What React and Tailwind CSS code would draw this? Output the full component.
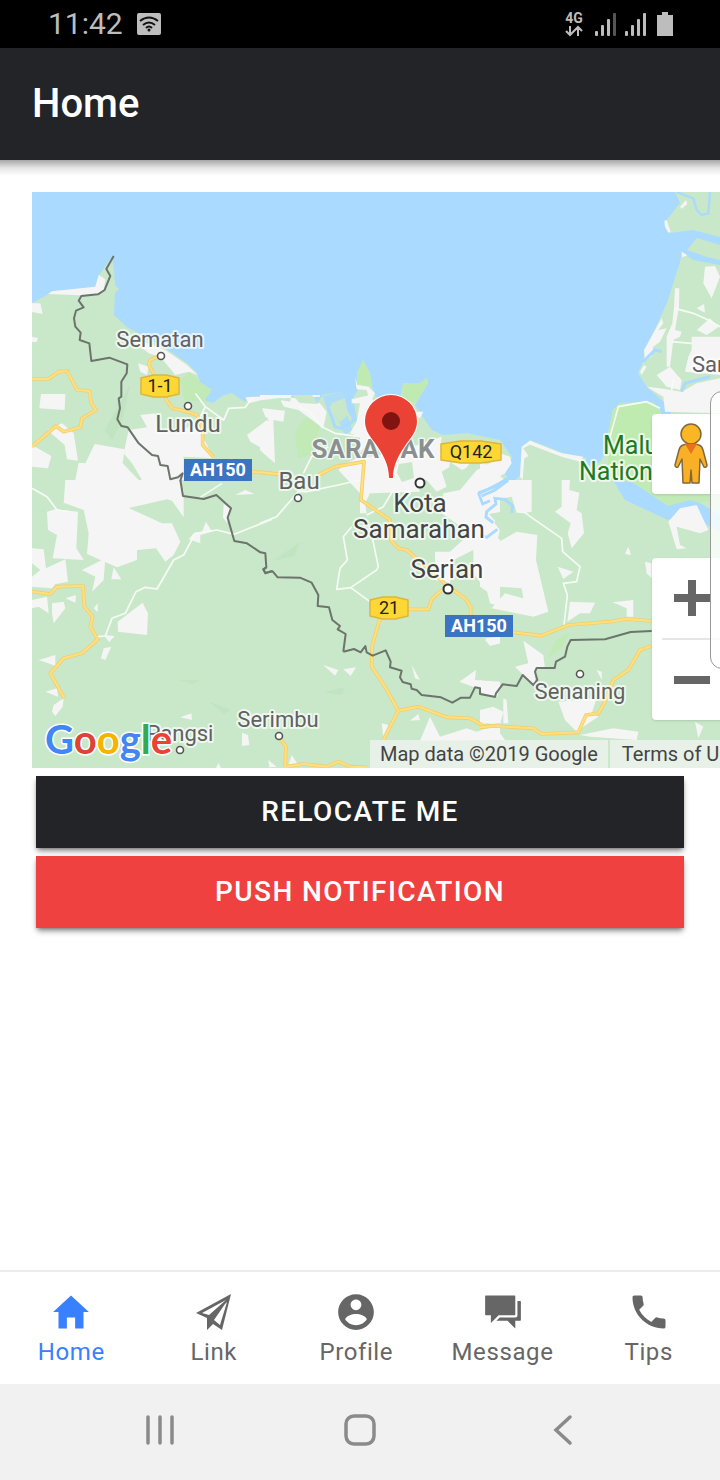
import React from "react";
import { IoMdHome, IoMdContact, IoMdChatboxes, IoMdCall } from "react-icons/io";

const T = {
  northWest: "translate(32 190) scale(0.33333)",
  centre: "translate(260 340) scale(0.33333)",
  northEast: "translate(480 190) scale(0.33333)",
  southWest: "translate(32 480) scale(0.33333)",
  south: "translate(260 590) scale(0.33333)",
  southEast: "translate(480 480) scale(0.33333)",
};

const WHITE_AREAS = {
  northWest: [
    "0,340 25,340 32,372 0,366",
    "48,312 60,304 190,290 200,255 220,268 215,300 195,314 145,316",
    "0,440 18,444 14,456 0,456",
    "27,612 100,612 98,660 22,655",
    "46,720 90,700 125,730 138,812 105,808 98,765",
    "0,765 58,798 48,835 0,830",
    "188,762 278,778 272,820 320,870 130,870 140,818 160,820",
    "290,440 400,480 465,525 497,555 470,545 430,555 385,500 350,490",
    "318,520 350,530 345,555 325,545",
    "325,675 370,670 375,725 440,730 500,690 515,745 545,805 455,800 455,870 330,870 300,820 275,790 290,720 345,712",
    "645,735 705,690 720,700 720,790 690,775 655,755",
    "640,622 720,618 720,632 690,630 650,640",
    "690,655 715,660 720,690 700,680",
  ],
  centre: [
    "0,165 95,165 90,185 60,180 72,200 115,210 190,265 200,215 180,190 115,185 105,165 180,165 180,170 0,178",
    "8,205 75,212 70,245 40,240 45,370 10,340 0,330 0,275 30,250",
    "275,178 330,165 345,190 320,225 330,300 300,340 300,290 270,280 290,245 300,190 275,190",
    "285,110 292,135 325,140 345,160 330,190 320,150 290,148",
    "290,355 400,340 545,290 540,330 560,355 630,370 605,400 570,380 545,395 560,440 530,455 500,420 470,425 480,455 330,460 315,490 320,520 300,520 300,460 235,390 260,370",
    "700,370 720,390 720,520 690,570 720,600 720,760 705,770 670,740 640,700 640,630 580,660 570,730 525,720 525,635 570,635 630,580 545,520 550,460 600,450 650,390",
    "470,215 490,215 480,235 465,225",
  ],
  northEast: [
    "553,92 560,90 572,125 565,128 555,110",
    "600,50 618,30 622,42 605,56",
    "605,185 622,196 606,202",
    "675,230 705,228 720,260 695,325 670,280",
    "585,295 598,295 597,350 585,420 605,425 600,440 580,450 570,530 560,530 560,440 577,400 582,350",
    "545,385 550,400 535,420 560,415 540,455 520,470 515,500 495,512 492,480",
    "650,355 672,342 675,368",
    "650,420 690,385 715,412 680,435",
    "635,440 720,440 720,555 665,550 615,545 625,500 635,480",
    "530,555 570,530 605,570 600,600 560,590",
    "500,590 540,595 605,605 650,580 720,565 720,670 555,665 550,620",
    "480,545 492,525 500,530 485,555",
    "60,790 90,800 95,820 75,850 40,870 0,870 0,830 30,820",
    "120,860 125,770 150,752 245,790 310,800 300,815 245,800 150,764 130,775 145,798 133,805 128,870",
  ],
  southWest: [
    "100,0 440,0 455,30 455,112 420,62 405,58 290,84 390,130 420,130 445,185 425,225 400,245 372,205 315,210 315,240 255,262 165,222 170,160 155,90 95,68",
    "45,95 70,88 138,95 133,205 155,240 62,235 75,165 48,150",
    "0,205 35,208 42,265 100,238 108,305 70,312 60,325 0,320 0,290 25,270 0,250",
    "150,270 220,235 215,300 180,335 190,290",
    "245,262 268,298 238,298",
    "100,355 132,345 130,368",
    "0,360 45,350 50,400 20,380 0,385",
    "60,370 95,365 100,385 65,430 60,400",
    "185,385 197,370 197,396",
    "257,425 332,368 348,400 345,465 258,455",
    "215,465 248,468 232,486",
    "207,535 215,505 238,500 220,540",
    "20,540 70,525 70,557",
    "40,635 75,625 78,650",
    "65,675 95,655 92,680 70,708 60,695",
    "575,72 597,85 585,130 573,112",
    "610,45 640,30 668,42",
    "485,160 510,155 522,125 540,155 505,165 505,190 470,178",
    "445,712 478,700 480,720",
    "630,758 648,765 652,795 630,798",
    "552,864 560,848 566,864",
  ],
  south: [
    "190,225 235,240 225,257",
    "250,238 288,232 272,258",
    "598,275 648,240 645,270 720,275 720,290 712,320 665,300",
    "455,225 480,270 465,265",
    "365,400 385,405 370,440",
    "450,392 475,372 480,390",
    "510,380 540,440 620,415 650,425 720,400 720,450 480,452",
    "25,510 50,530 28,532",
    "95,495 115,525 85,525",
    "680,0 720,0 720,50 690,40",
    "675,145 720,140 720,160 690,165",
  ],
  southEast: [
    "0,-60 75,0 155,0 155,95 130,100 110,98 95,50 45,60 20,100 60,150 50,190 0,190",
    "245,0 270,0 268,30 298,38 290,90 305,100 312,160 275,205 263,160 272,130 225,95 245,80 245,40",
    "0,190 50,190 110,155 172,165 168,240 205,395 160,410 35,385 75,340 130,355 125,325 60,320 45,350 0,320",
    "565,125 600,85 650,75 685,150 660,160 590,140 600,195 620,205 590,208",
    "435,222 445,200 453,225",
    "233,260 280,275 250,297",
    "262,425 270,365 345,368 330,400 300,400",
    "398,367 460,360 460,410 440,410 440,385",
    "130,482 190,525 195,565 165,570 165,620 105,560 145,550",
    "0,600 45,615 65,625 40,650 0,635",
    "235,665 350,655 335,700 355,710 310,740 290,755 255,720",
    "0,690 40,680 70,695 60,735 20,730 0,735",
    "70,655 80,660 85,730 70,730",
    "350,570 365,575 365,600",
    "0,765 60,760 75,780 0,780",
    "300,765 400,745 475,755 470,780 330,770",
    "645,725 670,740 655,775",
    "15,480 55,475 60,490 30,498",
    "495,245 515,250 515,295 500,280",
  ],
};

const WATER_LINES = {
  northEast: [
    ["M590 6L640 25L650 60L665 75L685 70L690 6", 7],
    ["M490 515L525 480L545 485M605 605L615 580L690 560", 9],
  ],
  southEast: [
    ["M-5 42L55 12L95 -12L110 -30M85 0L45 30L5 48", 9],
    ["M95 98L98 78L75 58L45 55L48 72L20 95L18 112L40 128M52 148L20 172L0 165", 9],
  ],
  centre: [
    ["M655 458L668 492L690 482M655 458L720 435", 8],
    ["M205 205L225 260L245 265L270 245", 9],
  ],
};

const WHITE_ROADS = {
  northWest: ["M520 650L575 690L590 655L640 652L660 625", "M490 610L520 650L500 690"],
  centre: [
    "M0 550L50 530L115 455L140 455L235 435L300 420",
    "M130 400L155 350L205 320",
    "M115 200L150 215L185 260L225 280L300 290",
    "M275 560L250 590L262 660L240 685L230 748L272 743L350 690L355 680L330 560",
    "M272 743L330 785",
    "M320 525L370 500L400 450",
  ],
  northEast: [
    "M585 355L640 370L685 390L720 410",
    "M575 455L635 460",
    "M390 740L415 650L500 635L540 655",
    "M575 600L580 570",
  ],
  southWest: [
    "M0 25L45 50L75 90L110 95",
    "M195 470L220 468L240 415L280 400L312 335L340 322L375 327L425 240L455 225L490 160L555 150L607 163L720 118",
    "M500 55L570 10",
  ],
  southEast: ["M130 95L180 130L245 175L248 215L300 260L290 305L250 310L262 345L252 435"],
};

const YELLOW_ROADS = {
  northWest: [
    "M0 567L50 567L80 545L105 543L135 600L172 603L178 640L192 660L150 685L145 712L95 725L72 708L0 770",
    "M385 497L355 510L350 525L365 550M400 625L420 655L465 665L495 675L512 720L512 765L545 802",
    "M655 845L720 850",
  ],
  centre: [
    "M0 397L60 403M175 405L225 380L312 365L303 480L390 540L392 600L415 625L440 630L565 740L615 775L632 800L632 830",
    "M440 808L505 808L515 778L545 750",
  ],
  southWest: ["M0 335L55 342L75 320L153 318L157 380L182 410L175 440L197 478L150 520L95 535L55 580L97 655"],
  south: [
    "M360 85L337 165L335 230L375 290L415 362L370 450",
    "M415 362L475 350L560 382L630 385L675 410L720 405",
    "M60 445L78 470L75 530M78 530L130 522L200 530L235 515L270 530L320 532",
  ],
  southEast: [
    "M98 457L185 467L265 435L390 425L440 417L515 423",
    "M0 742L40 738L160 745L185 762L295 757L318 705L355 700L375 665L400 600L445 570L480 510L515 498",
  ],
};

const BORDER = {
  northWest:
    "M245 198L223 237L235 258L218 300L198 313L148 318L140 332L155 352L132 362L126 385L130 410L146 428L143 450L172 460L178 513L232 503L286 523L284 550L268 575L268 620L260 625L264 655L256 688L268 708L287 712L320 760L360 795L378 798L385 825L407 828L415 868L438 862L452 850L445 872",
  southWest:
    "M445 0L453 48L515 57L553 45L597 85L587 113L607 183L645 190L685 217L700 220L703 262L694 268L700 280L720 273",
  centre:
    "M19 682L10 688L16 698L38 694L53 712L120 713L155 728L175 765L173 798L207 802L217 840L240 858L233 868L257 882L250 935",
  south:
    "M250 185L282 177L302 187L316 168L320 187L338 197L377 181L392 215L390 232L425 242L420 262L428 276L452 283L455 296L470 300L485 315L543 322L577 338L603 323L630 323L645 292L660 295L660 312L707 321",
  southEast:
    "M45 652L48 640L68 613L110 618L128 585L160 615L172 600L165 575L170 564L224 564L228 545L255 530L262 500L272 480L375 478L452 456L515 453",
};

const TOWNS = [
  { name: "Sematan", x: 160, y: 347, size: 22, dot: [161, 356] },
  { name: "Lundu", x: 188, y: 432, size: 24, dot: [188, 406] },
  { name: "Bau", x: 299, y: 489, size: 24, dot: [298, 498] },
  { name: "Senaning", x: 580, y: 699, size: 22, dot: [580, 674] },
  { name: "Serimbu", x: 278, y: 727, size: 22, dot: [279, 736] },
  { name: "Pangsi", x: 180, y: 741, size: 22, dot: [180, 750] },
  { name: "Kota", x: 420, y: 512, size: 26, dot: [420, 483], big: true },
  { name: "Samarahan", x: 419, y: 538, size: 26, big: true },
  { name: "Serian", x: 447, y: 578, size: 26, dot: [448, 589], big: true },
];

function Shield({ x, y, w, label }) {
  const l = x - w / 2;
  const r = x + w / 2;
  return (
    <g>
      <path
        d={`M${l} ${y - 8}L${x - w / 6} ${y - 11}H${x + w / 6}L${r} ${y - 8}V${y + 8}L${x + w / 6} ${y + 11}H${x - w / 6}L${l} ${y + 8}Z`}
        fill="#fdd835"
        stroke="#dfb43c"
        strokeWidth="1.5"
        strokeLinejoin="round"
      />
      <text x={x} y={y + 6} textAnchor="middle" fontSize="18" fill="#222">
        {label}
      </text>
    </g>
  );
}

function AsianHighway({ x, y }) {
  return (
    <g>
      <rect x={x} y={y} width="68" height="22" fill="#3b74c2" />
      <text x={x + 34} y={y + 17} textAnchor="middle" fontSize="18" fontWeight="700" fill="#fff">
        AH150
      </text>
    </g>
  );
}

function Layer({ data, children }) {
  return Object.entries(data).map(([area, items]) => (
    <g key={area} transform={T[area]}>
      {[].concat(items).map((item, i) => (
        <React.Fragment key={i}>{children(item)}</React.Fragment>
      ))}
    </g>
  ));
}

function MapDrawing() {
  return (
    <svg
      className="block h-full w-full font-[Roboto,sans-serif]"
      viewBox="32 192 688 576"
      preserveAspectRatio="xMinYMin slice"
      role="img"
      aria-label="Map of Sarawak"
    >
      <rect x="32" y="192" width="688" height="576" fill="#c8e8c9" />
      <g fill="#b9dfb9" opacity="0.5">
        <path d="M105 430L130 385L122 420L112 440ZM180 680l20 0l-8 4zM210 702l20 8l-6 4zM275 560l25 -18l-6 14zM325 692l20 -5l-4 8z" />
      </g>
      <g fill="#c0ebb0" opacity="0.75">
        <path d="M180 380L190 372L200 382L212 390L210 402L185 400ZM295 432L308 415L320 428L310 455L298 458Z" />
        <path d="M548 658L556 640L570 632L560 650ZM613 478L720 478L720 500L690 503L668 508Z" />
      </g>
      <path
        fill="#aadaff"
        d="M32 192V303L47 295L53 291L95 287L99 275L112 257L114 270L115 285L119 289L115 293L114 315L127 327L165 348L187 363L197 373L200 382L212 390L205 400L213 403L222 396L232 393L245 402L249 397L272 396L320 395L343 392L345 407L352 418L348 427L357 420L353 398L358 390L357 373L363 360L370 373L372 387L376 397L400 400L403 383L420 383L427 378L428 383L422 393L415 405L420 413L432 430L443 435L467 433L500 440L512 457L505 474L512 484L520 475L522 447L530 440L563 453L587 458L580 468L600 462L607 450L608 433L613 410L620 403L653 402L660 410L663 418L672 415L665 403L647 387L638 373L643 362L645 350L667 303L680 262L682 252L693 260L720 265V192Z"
      />
      <path
        fill="#aadaff"
        d="M290 394L322 394L328 412L338 420L345 435L352 430L345 407L343 392L322 396L316 405L325 430L312 415L300 412Z"
        opacity="0.85"
      />
      <path fill="#c8e8c9" d="M675 192L680 203L665 222L670 233L693 230L720 237V192ZM687 250L697 238L720 245V260L707 257Z" />
      <path
        fill="#c0ebb0"
        d="M357 373L363 360L370 373L371 386L357 384ZM403 383L420 383L427 378L428 383L422 393L415 403L402 398ZM608 433L613 410L620 403L653 402L660 410V480H608Z"
      />
      <path fill="#aadaff" d="M613 480L632 482L668 506L690 500L700 503L720 515V531L705 524L695 507L668 520L625 500Z" />

      <Layer data={WHITE_AREAS}>{(points) => <polygon points={points} fill="#f5f5f5" />}</Layer>
      <g fill="#c8e8c9">
        <path d="M399 464L412 462L414 478L402 482L397 473ZM332 403L345 398L348 415L340 422L328 410ZM263 400L282 398L278 408L266 408ZM292 395L312 395L318 404L300 403Z" />
        <path d="M489 514L500 512L512 512L520 520L512 530L500 531L497 523ZM450 462L462 470L480 462L466 482L446 490Z" />
      </g>
      <Layer data={WATER_LINES}>
        {([d, width]) => <path d={d} fill="none" stroke="#aadaff" strokeWidth={width} />}
      </Layer>
      <Layer data={WHITE_ROADS}>
        {(d) => <path d={d} fill="none" stroke="#f7fbf5" strokeWidth="5" strokeLinejoin="round" />}
      </Layer>
      <Layer data={YELLOW_ROADS}>
        {(d) => (
          <>
            <path d={d} fill="none" stroke="#f3cf6c" strokeWidth="11" strokeLinejoin="round" />
            <path d={d} fill="none" stroke="#ffdf80" strokeWidth="6" strokeLinejoin="round" />
          </>
        )}
      </Layer>
      <Layer data={BORDER}>
        {(d) => <path d={d} fill="none" stroke="#6c746c" strokeWidth="6" strokeLinejoin="round" />}
      </Layer>

      <g
        textAnchor="middle"
        stroke="#fff"
        strokeOpacity="0.7"
        strokeLinejoin="round"
        className="[paint-order:stroke]"
      >
        <text x="373" y="458" fontSize="26" fontWeight="700" fill="#8c8f90" strokeWidth="3">
          SARAWAK
        </text>
        {TOWNS.map((t) => (
          <g key={t.name}>
            <text x={t.x} y={t.y} fontSize={t.size} fill={t.big ? "#444" : "#616161"} strokeWidth="4">
              {t.name}
            </text>
            {t.dot && (
              <circle
                cx={t.dot[0]}
                cy={t.dot[1]}
                r={t.big ? 4.5 : 3.5}
                fill="#fff"
                stroke={t.big ? "#333" : "#555"}
                strokeOpacity="1"
                strokeWidth={t.big ? 2 : 1.6}
                className="[paint-order:normal]"
              />
            )}
          </g>
        ))}
        <text x="692" y="372" textAnchor="start" fontSize="22" fill="#616161" strokeWidth="4">
          Saratok
        </text>
        <text x="603" y="454" textAnchor="start" fontSize="25" fill="#1e7a22" strokeWidth="4">
          Maludam
        </text>
        <text x="579" y="480" textAnchor="start" fontSize="25" fill="#1e7a22" strokeWidth="4">
          National Park
        </text>
      </g>

      <Shield x={160} y={386} w={38} label="1-1" />
      <Shield x={471} y={452} w={60} label="Q142" />
      <Shield x={389} y={608} w={38} label="21" />
      <AsianHighway x={184} y={459} />
      <AsianHighway x={445} y={615} />

      <path
        d="M389 478C389 465 383 454 375 443C369 435 365 430 365 421A26 26 0 0 1 417 421C417 430 413 435 407 443C399 454 393 465 393 478Z"
        fill="#ea4335"
        stroke="#fff"
        strokeWidth="2"
        className="[paint-order:stroke]"
      />
      <circle cx="391" cy="421" r="9" fill="#811411" />

      <text
        x="45"
        y="754"
        fontSize="40"
        fontWeight="700"
        stroke="#fff"
        strokeWidth="3"
        className="font-[Lato,sans-serif] [paint-order:stroke]"
      >
        <tspan fill="#4285f4">G</tspan>
        <tspan fill="#db4437">o</tspan>
        <tspan fill="#f4b400">o</tspan>
        <tspan fill="#4285f4">g</tspan>
        <tspan fill="#34a853">l</tspan>
        <tspan fill="#ea4335">e</tspan>
      </text>
    </svg>
  );
}

function Pegman() {
  return (
    <svg viewBox="0 0 36 62" className="h-[62px] w-9" aria-hidden="true">
      <g stroke="#80683c" strokeWidth="1.5" strokeLinejoin="round">
        <path
          d="M9 22Q17 19 25 22Q28 23 29 27L33 42Q33 45 30 44L26 36L25 60H18L17 47L16 60H9L8 36L4 44Q1 45 1 42L5 27Q6 23 9 22Z"
          fill="#f9b024"
        />
        <circle cx="17" cy="11" r="10" fill="#fbb626" />
      </g>
      <path d="M11 21H23L17 31Z" fill="#e5731f" />
    </svg>
  );
}

function MapPanel() {
  return (
    <section className="relative ml-8 h-[576px] overflow-hidden">
      <MapDrawing />
      <button
        type="button"
        aria-label="Street View"
        className="absolute top-[222px] -right-3 flex h-20 w-20 items-center justify-center rounded-sm bg-white shadow"
      >
        <Pegman />
      </button>
      <div className="absolute top-[366px] -right-3 flex w-20 flex-col items-center rounded-sm bg-white shadow">
        <button type="button" aria-label="Zoom in" className="flex h-20 w-full items-center justify-center">
          <svg viewBox="0 0 36 36" className="h-9 w-9" aria-hidden="true">
            <path d="M14 0h8v14h14v8H22v14h-8V22H0v-8h14z" fill="#666" />
          </svg>
        </button>
        <div className="h-[2px] w-15 bg-[#e6e6e6]" />
        <button type="button" aria-label="Zoom out" className="flex h-20 w-full items-center justify-center">
          <svg viewBox="0 0 36 36" className="h-9 w-9" aria-hidden="true">
            <path d="M0 14h36v8H0z" fill="#666" />
          </svg>
        </button>
      </div>
      <div className="absolute bottom-0 left-[338px] flex gap-[2px] text-xl leading-7 whitespace-nowrap text-[#444]">
        <span className="bg-[#f5f5f5]/70 px-[10px]">Map data ©2019 Google</span>
        <a href="#terms" className="bg-[#f5f5f5]/70 px-3">
          Terms of Use
        </a>
      </div>
      <div className="absolute top-[199px] -right-1 h-[278px] w-[14px] rounded-l-xl border border-[#999] bg-white/80" />
    </section>
  );
}

function SignalBars({ faded }) {
  return (
    <svg viewBox="0 0 22 24" className="h-6 w-[22px]" fill="#bdbdbd" aria-hidden="true">
      <rect x="0" y="19" width="3" height="5" rx="1" />
      <rect x="6" y="13" width="3" height="11" rx="1" />
      <rect x="12" y="7" width="3" height="17" rx="1" />
      <rect x="18" y="1" width="3" height="23" rx="1" fill={faded ? "#555" : "#bdbdbd"} />
    </svg>
  );
}

function StatusBar() {
  return (
    <div className="flex h-12 items-center bg-black pr-[47px] pl-12 text-[#bdbdbd]">
      <span className="text-[30px] leading-9">11:42</span>
      <svg viewBox="0 0 24 24" className="ml-[14px] h-6 w-6" aria-hidden="true">
        <rect x="0" y="1" width="24" height="22" rx="2" fill="#bdbdbd" />
        <g fill="none" stroke="#111" strokeWidth="2">
          <path d="M3 9Q12 2 21 9" />
          <path d="M6 13Q12 8 18 13" />
          <path d="M9 16Q12 13 15 16" />
        </g>
        <circle cx="12" cy="18" r="1.5" fill="#111" />
      </svg>
      <div className="ml-auto flex items-center gap-2">
        <div className="mr-1 flex flex-col items-center">
          <span className="text-sm leading-[14px] font-bold">4G</span>
          <svg viewBox="0 0 18 12" className="h-3 w-[18px]" fill="none" stroke="#bdbdbd" strokeWidth="2" aria-hidden="true">
            <path d="M5 1V10M1 6L5 10L9 6M13 11V2M9 6L13 2L17 6" />
          </svg>
        </div>
        <SignalBars faded />
        <SignalBars />
        <svg viewBox="0 0 16 24" className="ml-[2px] h-6 w-4" fill="#bdbdbd" aria-hidden="true">
          <path d="M5 0h6v3h5v21H0V3h5z" />
        </svg>
      </div>
    </div>
  );
}

function PaperPlane({ className }) {
  return (
    <svg viewBox="0 0 36 36" className={className} aria-hidden="true">
      <path
        fillRule="evenodd"
        fill="currentColor"
        d="M35 0L0 19L11 24L11 36L17 30L26 36ZM30 6L13 21L6 19ZM31 8L24 31L18 26L29 10Z"
      />
    </svg>
  );
}

const TABS = [
  { label: "Home", Icon: IoMdHome, active: true },
  { label: "Link", Icon: PaperPlane, small: true },
  { label: "Profile", Icon: IoMdContact },
  { label: "Message", Icon: IoMdChatboxes },
  { label: "Tips", Icon: IoMdCall },
];

function TabBar() {
  return (
    <nav className="flex h-[114px] border-t-2 border-[#ededed] bg-white">
      {TABS.map(({ label, Icon, active, small }) => (
        <a
          key={label}
          href={"#" + label.toLowerCase()}
          aria-current={active ? "page" : undefined}
          className={
            "flex flex-1 flex-col items-center px-6 pt-[18px] " + (active ? "text-[#3880ff]" : "text-[#666]")
          }
        >
          <span className="flex h-11 items-center">
            <Icon className={small ? "h-9 w-9" : "h-11 w-11"} />
          </span>
          <span className="text-2xl leading-9 tracking-wide">{label}</span>
        </a>
      ))}
    </nav>
  );
}

function SystemNav() {
  return (
    <div className="grid h-24 grid-cols-3 items-center justify-items-center bg-[#f1f1f1] px-15 pb-1">
      <button type="button" aria-label="Recent apps">
        <svg
          viewBox="0 0 32 32"
          className="h-8 w-8"
          fill="none"
          stroke="#8a8a8a"
          strokeWidth="3.5"
          strokeLinecap="round"
          aria-hidden="true"
        >
          <path d="M4 3V29M16 3V29M28 3V29" />
        </svg>
      </button>
      <button type="button" aria-label="Home screen">
        <svg viewBox="0 0 32 32" className="h-8 w-8" fill="none" stroke="#8a8a8a" strokeWidth="3.5" aria-hidden="true">
          <rect x="2" y="2" width="28" height="28" rx="8" />
        </svg>
      </button>
      <button type="button" aria-label="Back">
        <svg
          viewBox="0 0 32 32"
          className="h-8 w-8"
          fill="none"
          stroke="#8a8a8a"
          strokeWidth="3.5"
          strokeLinecap="round"
          aria-hidden="true"
        >
          <path d="M26 3L12 16L26 29" />
        </svg>
      </button>
    </div>
  );
}

export default function App() {
  return (
    <div className="flex min-h-screen flex-col overflow-hidden bg-white font-[Roboto,sans-serif]">
      <StatusBar />
      <header className="flex h-28 items-center bg-[#222428] px-8">
        <h1 className="text-[40px] leading-none font-medium text-white">Home</h1>
      </header>
      <div className="h-4 bg-linear-to-b from-black/35 via-black/10 via-50% to-black/0" />
      <main className="flex-1 pt-4">
        <MapPanel />
        <div className="flex flex-col gap-2 px-9 pt-2">
          <button
            type="button"
            className="h-18 bg-[#222428] text-[28px] font-medium tracking-wider text-white uppercase shadow-md shadow-black/40"
          >
            Relocate me
          </button>
          <button
            type="button"
            className="h-18 bg-[#f04141] text-[28px] font-medium tracking-wider text-white uppercase shadow-md shadow-black/40"
          >
            Push notification
          </button>
        </div>
      </main>
      <TabBar />
      <SystemNav />
    </div>
  );
}
